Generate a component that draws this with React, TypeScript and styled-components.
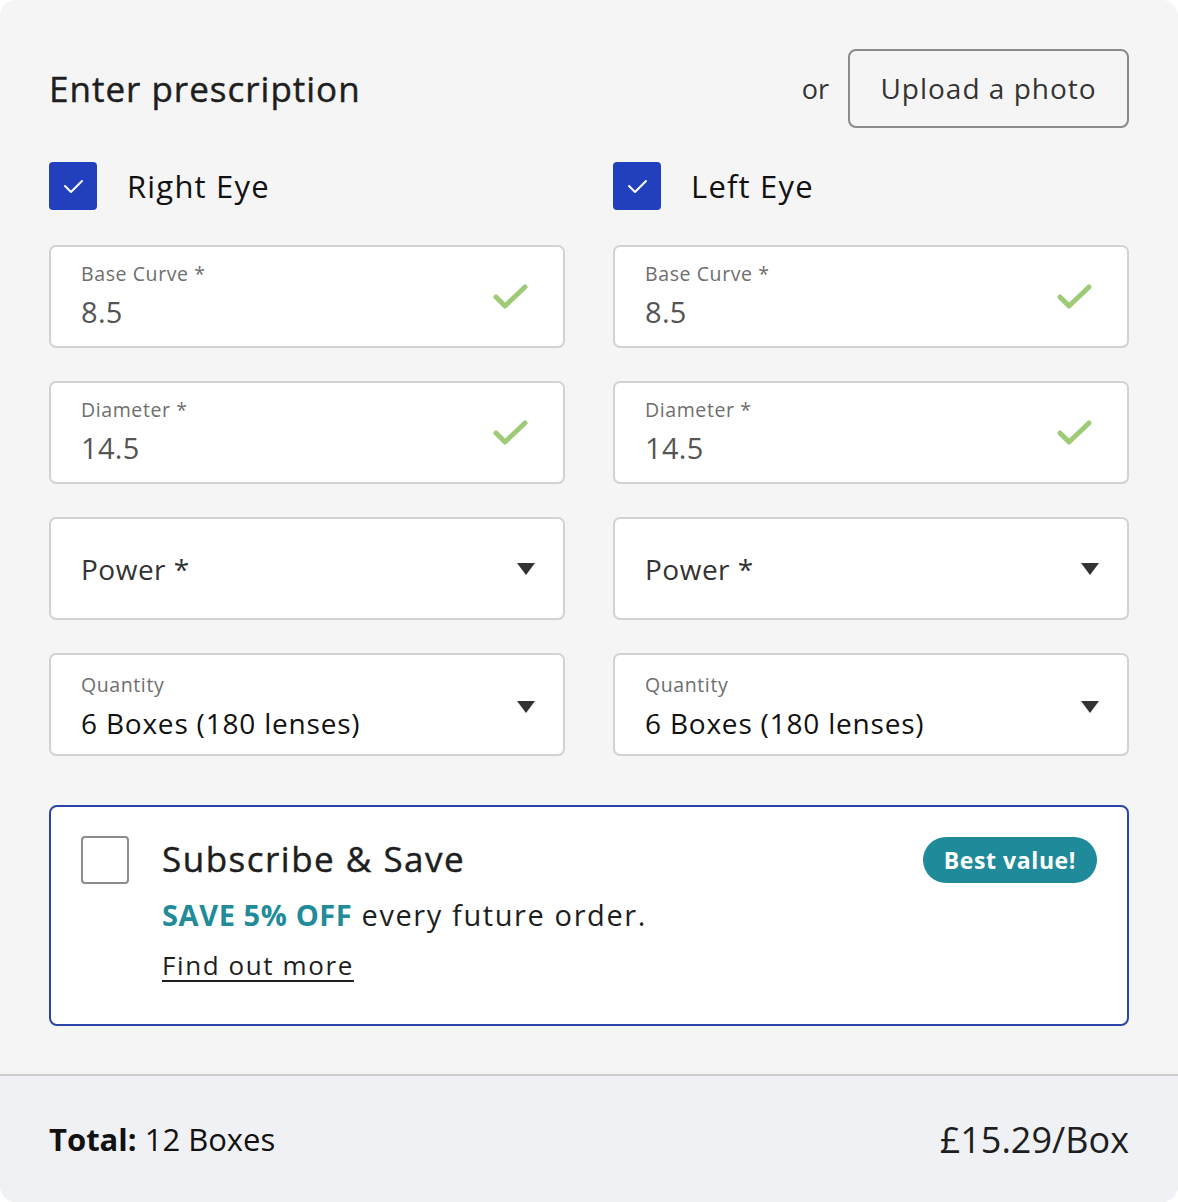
import React from "react";
import styled, { createGlobalStyle } from "styled-components";

const Global = createGlobalStyle`
  html, body { margin: 0; padding: 0; background: #ffffff; }
  body { font-family: "Open Sans", "Noto Sans", sans-serif; }
  * { box-sizing: border-box; }
`;

const Card = styled.div`
  width: 1178px;
  height: 1202px;
  background: #f5f5f5;
  border-radius: 16px;
  overflow: hidden;
  display: flex;
  flex-direction: column;
`;

const Main = styled.div`
  flex: 1;
  padding: 49px 49px 0 49px;
  display: flex;
  flex-direction: column;
`;

const Header = styled.div`
  display: flex;
  align-items: center;
  justify-content: space-between;
  height: 78px;
`;

const Title = styled.h1`
  margin: 0;
  font-size: 35px;
  font-weight: 500;
  color: #1e1e1e;
  letter-spacing: 1px;
  -webkit-text-stroke: 0.45px #1e1e1e;
`;

const UploadGroup = styled.div`
  display: flex;
  align-items: center;
  gap: 19px;
`;

const Or = styled.span`
  font-size: 27px;
  color: #333;
`;

const UploadButton = styled.button`
  width: 281px;
  height: 79px;
  border: 2px solid #8a8a8a;
  border-radius: 8px;
  background: transparent;
  font-family: inherit;
  font-size: 28px;
  letter-spacing: 1px;
  color: #333;
  cursor: pointer;
`;

const Columns = styled.div`
  display: grid;
  grid-template-columns: 516px 516px;
  column-gap: 48px;
  margin-top: 35px;
`;

const Column = styled.div`
  display: flex;
  flex-direction: column;
  gap: 33px;
`;

const EyeRow = styled.label`
  display: flex;
  align-items: center;
  gap: 30px;
  height: 48px;
  margin-bottom: 2px;
`;

const CheckBox = styled.span<{ $checked?: boolean }>`
  width: 48px;
  height: 48px;
  border-radius: 4px;
  flex: none;
  display: flex;
  align-items: center;
  justify-content: center;
  background: ${(p) => (p.$checked ? "#2240bd" : "#ffffff")};
  border: ${(p) => (p.$checked ? "none" : "2px solid #8c8c8c")};
  margin-top: ${(p) => (p.$checked ? 0 : 2)}px;
`;

const EyeLabel = styled.span`
  font-size: 31px;
  letter-spacing: 1.2px;
  color: #111;
`;

const Field = styled.div<{ $offset?: number }>`
  height: 103px;
  background: #fff;
  border: 2px solid #d2d2d2;
  border-radius: 7px;
  display: flex;
  align-items: center;
  justify-content: space-between;
  padding: ${(p) => p.$offset ?? 0}px 28px 0 30px;
`;

const FieldText = styled.div`
  display: flex;
  flex-direction: column;
`;

const FieldLabel = styled.span`
  font-size: 19.5px;
  line-height: 24px;
  color: #6e6e6e;
  letter-spacing: 0.6px;
`;

const FieldValue = styled.span<{ $dark?: boolean }>`
  font-size: ${(p) => (p.$dark ? 28 : 29)}px;
  letter-spacing: ${(p) => (p.$dark ? 0.8 : 0.3)}px;
  line-height: 38px;
  margin-top: 7px;
  color: ${(p) => (p.$dark ? "#111" : "#555")};
`;

const Placeholder = styled.span`
  font-size: 28px;
  color: #333;
  letter-spacing: 0.5px;
`;

const IconSlot = styled.span<{ $shift?: number }>`
  display: flex;
  margin-right: ${(p) => p.$shift ?? 0}px;
`;

const Subscribe = styled.div`
  margin-top: 49px;
  height: 221px;
  background: #fff;
  border: 2px solid #2a44a8;
  border-radius: 8px;
  padding: 27px 30px 0 30px;
  display: grid;
  grid-template-columns: 48px 1fr auto;
  column-gap: 33px;
  align-items: start;
`;

const SubText = styled.div`
  display: flex;
  flex-direction: column;
  align-items: flex-start;
`;

const SubTitle = styled.span`
  font-size: 35px;
  line-height: 50px;
  font-weight: 500;
  letter-spacing: 1.5px;
  color: #1e1e1e;
  -webkit-text-stroke: 0.45px #1e1e1e;
`;

const SubLine = styled.span`
  font-size: 29px;
  line-height: 50px;
  margin-top: 6px;
  letter-spacing: 1.6px;
  color: #1e1e1e;
`;

const Save = styled.strong`
  color: #218b99;
  font-weight: 700;
  letter-spacing: 0.6px;
`;

const FindMore = styled.a`
  font-size: 26px;
  line-height: 44px;
  margin-top: 3px;
  letter-spacing: 1.6px;
  color: #1e1e1e;
  text-decoration: underline;
  text-underline-offset: 5px;
  text-decoration-thickness: 2px;
`;

const Badge = styled.span`
  height: 46px;
  padding: 0 21px;
  border-radius: 23px;
  background: #1f8a9a;
  color: #fff;
  font-weight: 700;
  font-size: 23px;
  letter-spacing: 0.6px;
  display: flex;
  align-items: center;
  margin-top: 3px;
`;

const Footer = styled.div`
  height: 128px;
  border-top: 2px solid #cccccc;
  background: #f0f1f5;
  display: flex;
  align-items: center;
  justify-content: space-between;
  padding: 0 49px;
`;

const Total = styled.span`
  font-size: 31px;
  color: #111;
  b { font-weight: 700; }
`;

const Price = styled.span`
  font-size: 36px;
  color: #1e1e1e;
`;

const Tick = () => (
  <svg width="26" height="20" viewBox="0 0 26 20">
    <polyline points="5,10 11,16 22,5" fill="none" stroke="#fff" strokeWidth="2" strokeLinecap="round" strokeLinejoin="round" />
  </svg>
);

const GreenCheck = () => (
  <svg width="38" height="28" viewBox="0 0 38 28">
    <polyline points="4,14 13,23 33,4" fill="none" stroke="#9dcb76" strokeWidth="5" strokeLinecap="round" strokeLinejoin="round" />
  </svg>
);

const Caret = () => (
  <svg width="18" height="12" viewBox="0 0 18 12">
    <polygon points="0,0 18,0 9,12" fill="#333" />
  </svg>
);

const EyeColumn = ({ name }: { name: string }) => (
  <Column>
    <EyeRow>
      <CheckBox $checked>
        <Tick />
      </CheckBox>
      <EyeLabel>{name}</EyeLabel>
    </EyeRow>
    <Field>
      <FieldText>
        <FieldLabel>Base Curve *</FieldLabel>
        <FieldValue>8.5</FieldValue>
      </FieldText>
      <IconSlot $shift={5}>
        <GreenCheck />
      </IconSlot>
    </Field>
    <Field>
      <FieldText>
        <FieldLabel>Diameter *</FieldLabel>
        <FieldValue>14.5</FieldValue>
      </FieldText>
      <IconSlot $shift={5}>
        <GreenCheck />
      </IconSlot>
    </Field>
    <Field>
      <Placeholder>Power *</Placeholder>
      <IconSlot>
        <Caret />
      </IconSlot>
    </Field>
    <Field $offset={5}>
      <FieldText>
        <FieldLabel>Quantity</FieldLabel>
        <FieldValue $dark>6 Boxes (180 lenses)</FieldValue>
      </FieldText>
      <IconSlot>
        <Caret />
      </IconSlot>
    </Field>
  </Column>
);

export default function App() {
  return (
    <>
      <Global />
      <Card>
        <Main>
          <Header>
            <Title>Enter prescription</Title>
            <UploadGroup>
              <Or>or</Or>
              <UploadButton>Upload a photo</UploadButton>
            </UploadGroup>
          </Header>
          <Columns>
            <EyeColumn name="Right Eye" />
            <EyeColumn name="Left Eye" />
          </Columns>
          <Subscribe>
            <CheckBox />
            <SubText>
              <SubTitle>Subscribe &amp; Save</SubTitle>
              <SubLine>
                <Save>SAVE 5% OFF</Save> every future order.
              </SubLine>
              <FindMore href="#">Find out more</FindMore>
            </SubText>
            <Badge>Best value!</Badge>
          </Subscribe>
        </Main>
        <Footer>
          <Total>
            <b>Total:</b> 12 Boxes
          </Total>
          <Price>£15.29/Box</Price>
        </Footer>
      </Card>
    </>
  );
}
